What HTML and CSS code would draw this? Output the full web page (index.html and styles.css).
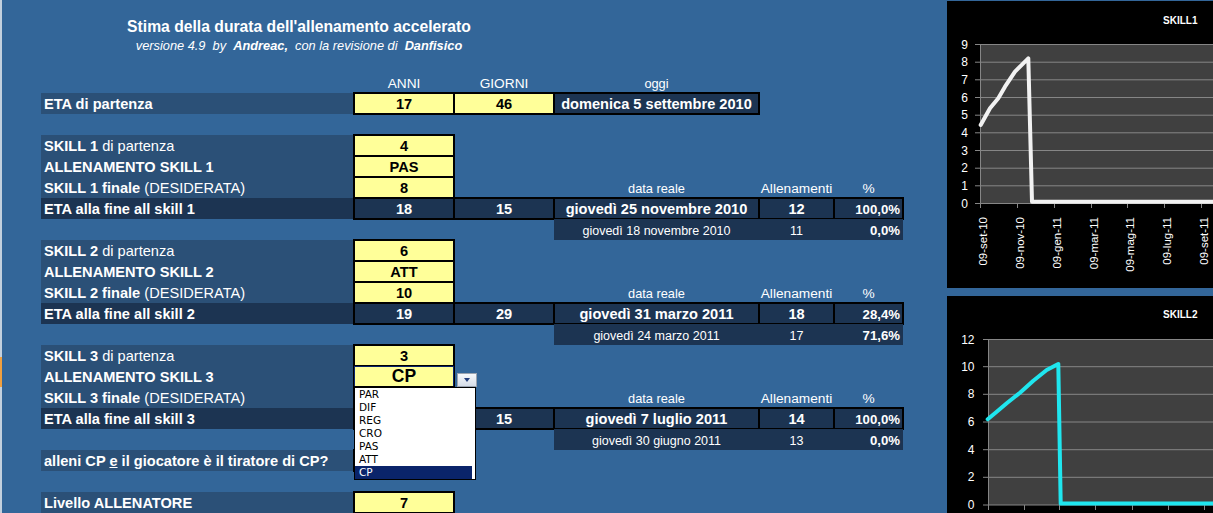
FILE: index.html
```html
<!DOCTYPE html>
<html lang="it">
<head>
<meta charset="utf-8">
<title>Stima della durata dell'allenamento accelerato</title>
<link rel="stylesheet" href="styles.css">
</head>
<body>
<div class="page">
  <div class="edge"><div class="sel"></div></div>
  <div class="sheet">
    <div class="head">
      <div class="title">Stima della durata dell'allenamento accelerato</div>
      <div class="subtitle">versione 4.9  by  <b>Andreac,</b>  con la revisione di  <b>Danfisico</b></div>
    </div>

    <div class="row"><div></div><div></div><div class="c hd">ANNI</div><div class="c hd">GIORNI</div><div class="c hd sm">oggi</div></div>
    <div class="row"><div></div><div class="c lab">ETA di partenza</div><div class="c y">17</div><div class="c y">46</div><div class="c d">domenica 5 settembre 2010</div></div>
    <div class="row"></div>

    <div class="row"><div></div><div class="c lab">SKILL 1<span class="n"> di partenza</span></div><div class="c y">4</div></div>
    <div class="row"><div></div><div class="c lab">ALLENAMENTO SKILL 1</div><div class="c y">PAS</div></div>
    <div class="row"><div></div><div class="c lab">SKILL 1 finale<span class="n"> (DESIDERATA)</span></div><div class="c y">8</div><div></div><div class="c hd sm">data reale</div><div class="c hd">Allenamenti</div><div class="c hd">%</div></div>
    <div class="row"><div></div><div class="c lab dk">ETA alla fine all skill 1</div><div class="c d">18</div><div class="c d">15</div><div class="c d">giovedì 25 novembre 2010</div><div class="c d">12</div><div class="c d pct">100,0%</div></div>
    <div class="row"><div></div><div></div><div></div><div></div><div class="c sub">giovedì 18 novembre 2010</div><div class="c sub">11</div><div class="c sub pct">0,0%</div></div>

    <div class="row"><div></div><div class="c lab">SKILL 2<span class="n"> di partenza</span></div><div class="c y">6</div></div>
    <div class="row"><div></div><div class="c lab">ALLENAMENTO SKILL 2</div><div class="c y">ATT</div></div>
    <div class="row"><div></div><div class="c lab">SKILL 2 finale<span class="n"> (DESIDERATA)</span></div><div class="c y">10</div><div></div><div class="c hd sm">data reale</div><div class="c hd">Allenamenti</div><div class="c hd">%</div></div>
    <div class="row"><div></div><div class="c lab dk">ETA alla fine all skill 2</div><div class="c d">19</div><div class="c d">29</div><div class="c d">giovedì 31 marzo 2011</div><div class="c d">18</div><div class="c d pct">28,4%</div></div>
    <div class="row"><div></div><div></div><div></div><div></div><div class="c sub">giovedì 24 marzo 2011</div><div class="c sub">17</div><div class="c sub pct">71,6%</div></div>

    <div class="row"><div></div><div class="c lab">SKILL 3<span class="n"> di partenza</span></div><div class="c y">3</div></div>
    <div class="row"><div></div><div class="c lab">ALLENAMENTO SKILL 3</div><div class="c y active">CP</div></div>
    <div class="row"><div></div><div class="c lab">SKILL 3 finale<span class="n"> (DESIDERATA)</span></div><div class="c y">8</div><div></div><div class="c hd sm">data reale</div><div class="c hd">Allenamenti</div><div class="c hd">%</div></div>
    <div class="row"><div></div><div class="c lab dk">ETA alla fine all skill 3</div><div class="c d">19</div><div class="c d">15</div><div class="c d">giovedì 7 luglio 2011</div><div class="c d">14</div><div class="c d pct">100,0%</div></div>
    <div class="row"><div></div><div></div><div></div><div></div><div class="c sub">giovedì 30 giugno 2011</div><div class="c sub">13</div><div class="c sub pct">0,0%</div></div>

    <div class="row"><div></div><div class="c lab">alleni CP <u>e</u> il giocatore è il tiratore di CP?</div><div class="c y">NO</div></div>
    <div class="row"></div>
    <div class="row"><div></div><div class="c lab">Livello ALLENATORE</div><div class="c y">7</div></div>

    <div class="ddbtn"><span class="tri"></span></div>
    <div class="ddlist">
      <div>PAR</div><div>DIF</div><div>REG</div><div>CRO</div><div>PAS</div><div>ATT</div><div class="on">CP</div>
    </div>
  </div>

  <div class="charts">
    <svg class="chart" width="266" height="287" viewBox="0 0 266 287">
      <rect width="266" height="287" fill="#000"/>
      <text x="216" y="23" class="ct">SKILL1</text>
      <rect x="33" y="43" width="233" height="159" fill="#404040"/>
      <g stroke="#868686" stroke-width="1">
        <line x1="28" y1="43.5" x2="266" y2="43.5"/>
        <line x1="28" y1="61.2" x2="266" y2="61.2"/>
        <line x1="28" y1="78.8" x2="266" y2="78.8"/>
        <line x1="28" y1="96.5" x2="266" y2="96.5"/>
        <line x1="28" y1="114.2" x2="266" y2="114.2"/>
        <line x1="28" y1="131.8" x2="266" y2="131.8"/>
        <line x1="28" y1="149.5" x2="266" y2="149.5"/>
        <line x1="28" y1="167.2" x2="266" y2="167.2"/>
        <line x1="28" y1="184.8" x2="266" y2="184.8"/>
        <line x1="28" y1="202.5" x2="266" y2="202.5"/>
        <line x1="33.5" y1="43" x2="33.5" y2="207"/>
        <line x1="70.5" y1="202" x2="70.5" y2="207"/>
        <line x1="107.5" y1="202" x2="107.5" y2="207"/>
        <line x1="144.5" y1="202" x2="144.5" y2="207"/>
        <line x1="180.5" y1="202" x2="180.5" y2="207"/>
        <line x1="217.5" y1="202" x2="217.5" y2="207"/>
        <line x1="254.5" y1="202" x2="254.5" y2="207"/>
      </g>
      <g class="yl" text-anchor="end">
        <text x="21" y="47.5">9</text>
        <text x="21" y="65.2">8</text>
        <text x="21" y="82.8">7</text>
        <text x="21" y="100.5">6</text>
        <text x="21" y="118.2">5</text>
        <text x="21" y="135.8">4</text>
        <text x="21" y="153.5">3</text>
        <text x="21" y="171.2">2</text>
        <text x="21" y="188.8">1</text>
        <text x="21" y="206.5">0</text>
      </g>
      <g class="xl" text-anchor="end">
        <text transform="translate(39.5,216) rotate(-90)">09-set-10</text>
        <text transform="translate(76.5,216) rotate(-90)">09-nov-10</text>
        <text transform="translate(113.5,216) rotate(-90)">09-gen-11</text>
        <text transform="translate(150.5,216) rotate(-90)">09-mar-11</text>
        <text transform="translate(186.5,216) rotate(-90)">09-mag-11</text>
        <text transform="translate(223.5,216) rotate(-90)">09-lug-11</text>
        <text transform="translate(260.5,216) rotate(-90)">09-set-11</text>
      </g>
      <polyline points="33.7,124 43,107.3 51.3,97.3 58,85.7 68,70.7 76.3,62.3 81.3,57.3 85,200.7 270,200.7" fill="none" stroke="#f2f2f2" stroke-width="4" stroke-linejoin="round" stroke-linecap="round"/>
    </svg>

    <svg class="chart" width="266" height="230" viewBox="0 0 266 230">
      <rect width="266" height="230" fill="#000"/>
      <text x="216" y="22" class="ct">SKILL2</text>
      <rect x="41" y="43" width="225" height="166" fill="#404040"/>
      <g stroke="#868686" stroke-width="1">
        <line x1="36" y1="43.5" x2="266" y2="43.5"/>
        <line x1="36" y1="70.7" x2="266" y2="70.7"/>
        <line x1="36" y1="98.3" x2="266" y2="98.3"/>
        <line x1="36" y1="126" x2="266" y2="126"/>
        <line x1="36" y1="153.7" x2="266" y2="153.7"/>
        <line x1="36" y1="181.3" x2="266" y2="181.3"/>
        <line x1="36" y1="209" x2="266" y2="209"/>
        <line x1="41.5" y1="43" x2="41.5" y2="214"/>
        <line x1="77.5" y1="209" x2="77.5" y2="214"/>
        <line x1="112.5" y1="209" x2="112.5" y2="214"/>
        <line x1="148.5" y1="209" x2="148.5" y2="214"/>
        <line x1="185.5" y1="209" x2="185.5" y2="214"/>
        <line x1="221.5" y1="209" x2="221.5" y2="214"/>
        <line x1="257.5" y1="209" x2="257.5" y2="214"/>
      </g>
      <g class="yl" text-anchor="end">
        <text x="27.5" y="47.5">12</text>
        <text x="27.5" y="74.7">10</text>
        <text x="27.5" y="102.3">8</text>
        <text x="27.5" y="130">6</text>
        <text x="27.5" y="157.7">4</text>
        <text x="27.5" y="185.3">2</text>
        <text x="27.5" y="213">0</text>
      </g>
      <polyline points="40.7,123.3 49.7,115.7 59.7,107.3 73,96.7 86.3,84.7 99.7,74 111.3,68 113.7,207.6 270,207.6" fill="none" stroke="#1fe6ef" stroke-width="4" stroke-linejoin="round" stroke-linecap="round"/>
    </svg>
  </div>
</div>
</body>
</html>
```
FILE: styles.css
```css
html, body {
  margin: 0;
  padding: 0;
}
body {
  background: #336699;
  width: 1213px;
  height: 513px;
  overflow: hidden;
  font-family: "Liberation Sans", Arial, sans-serif;
  color: #fff;
}
.page {
  display: flex;
  height: 513px;
}
.edge {
  width: 2px;
  flex: none;
  background: #c3d0de;
  display: flex;
  flex-direction: column;
}
.edge .sel {
  margin-top: 357px;
  height: 30px;
  background: #f0a040;
}
.sheet {
  width: 945px;
  flex: none;
  position: relative;
}
.head {
  height: 72px;
  box-sizing: border-box;
  margin-left: 39px;
  width: 516px;
  padding-top: 17.5px;
  display: flex;
  flex-direction: column;
  align-items: center;
  white-space: pre;
}
.title {
  font-size: 15.7px;
  font-weight: bold;
  line-height: 18px;
}
.subtitle {
  margin-top: 3.4px;
  font-size: 12.8px;
  line-height: 14px;
  font-style: italic;
}
.row {
  display: grid;
  grid-template-columns: 39px 313px 100px 100px 205px 75px 69px;
  height: 21px;
}
.c {
  box-sizing: border-box;
  height: 21px;
  line-height: 20px;
  padding-top: 1px;
  font-size: 14.6px;
  white-space: nowrap;
  text-align: center;
  overflow: visible;
}
.lab {
  background: #2b5077;
  text-align: left;
  padding-left: 3px;
  font-weight: bold;
}
.lab .n {
  font-weight: normal;
}
.lab.dk {
  background: #1c3452;
}
.y {
  background: #ffff99;
  color: #000;
  font-weight: bold;
  box-shadow: inset 0 0 0 1px #000;
  outline: 1px solid #000;
}
.y.active {
  font-size: 17.5px;
  line-height: 19px;
  padding-top: 1px;
  box-shadow: inset 0 0 0 1px #0a246a;
}
.d {
  background: #1c3452;
  font-weight: bold;
  box-shadow: inset 0 0 0 1px #000;
  outline: 1px solid #000;
}
.hd {
  font-size: 13.7px;
  padding-top: 2px;
}
.hd.sm {
  font-size: 12.8px;
}
.sub {
  background: #1c3452;
  font-size: 12.5px;
  padding-top: 2px;
}
.pct {
  text-align: right;
  padding-right: 3px;
  font-weight: bold;
  font-size: 13.2px;
  padding-top: 2px;
}
.ddbtn {
  position: absolute;
  left: 455px;
  top: 373px;
  width: 20px;
  height: 14px;
  box-sizing: border-box;
  border: 1px solid #9aa3b0;
  background: linear-gradient(#f6f8fb, #d6dde8);
  display: flex;
  align-items: center;
  justify-content: center;
}
.tri {
  width: 0;
  height: 0;
  border-left: 3.5px solid transparent;
  border-right: 3.5px solid transparent;
  border-top: 4px solid #233e7c;
}
.ddlist {
  position: absolute;
  left: 352px;
  top: 387px;
  width: 122px;
  box-sizing: border-box;
  border: 1px solid #000;
  background: #fff;
  color: #000;
  font-family: "DejaVu Sans", sans-serif;
  font-size: 10.5px;
  z-index: 2;
}
.ddlist div {
  height: 13px;
  line-height: 13px;
  padding-left: 4px;
}
.ddlist .on {
  background: #0a246a;
  color: #fff;
  margin-right: 3px;
}
.charts {
  width: 266px;
  flex: none;
  display: flex;
  flex-direction: column;
  gap: 8px;
  padding-top: 1px;
}
.chart {
  display: block;
  flex: none;
}
.ct {
  font-family: "Liberation Sans", Arial, sans-serif;
  font-weight: bold;
  font-size: 10px;
  fill: #fff;
}
.yl text {
  font-family: "Liberation Sans", Arial, sans-serif;
  font-size: 12px;
  fill: #fff;
}
.xl text {
  font-family: "Liberation Sans", Arial, sans-serif;
  font-size: 11.5px;
  fill: #fff;
}
```
